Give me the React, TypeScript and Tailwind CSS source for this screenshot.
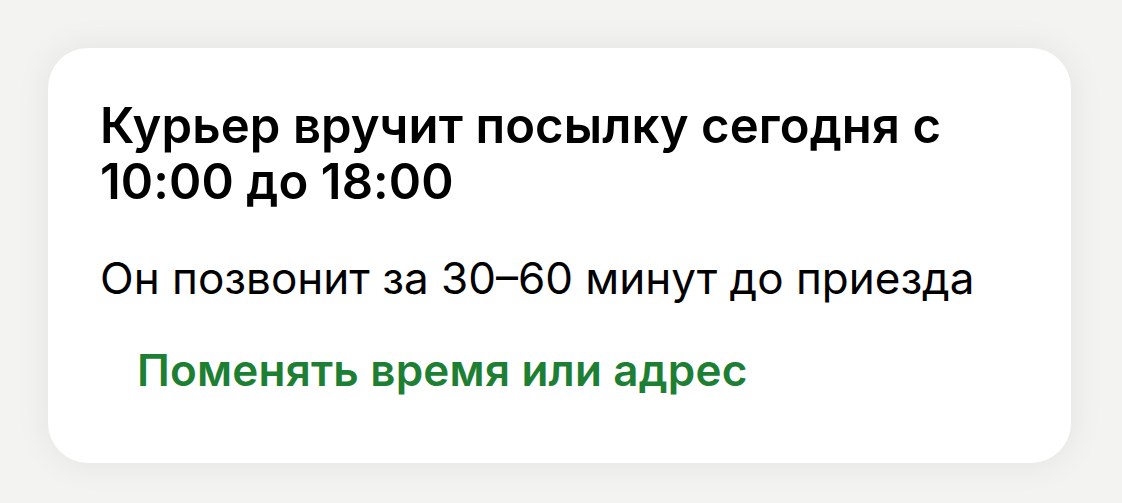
export default function App() {
  return (
    <div className="w-[1122px] h-[503px] bg-[#f3f3f1] pt-[48px] pl-[48px] font-['Inter','Liberation_Sans',sans-serif]">
      <div className="w-[1023px] h-[415px] bg-white rounded-[40px] shadow-[0_0_36px_rgba(0,0,0,0.07)] pt-[50px] pl-[52px]">
        <h1 className="text-[49px] leading-[56px] font-semibold text-black tracking-[0.1px]">
          Курьер вручит посылку сегодня с<br />10:00 до 18:00
        </h1>
        <p className="mt-[42px] text-[44px] leading-[52px] text-black">
          Он позвонит за 30–60 минут до приезда
        </p>
        <button className="mt-[40px] ml-[37px] text-[44px] leading-[52px] font-semibold text-[#1d7f34] tracking-[0.2px]">
          Поменять время или адрес
        </button>
      </div>
    </div>
  );
}
